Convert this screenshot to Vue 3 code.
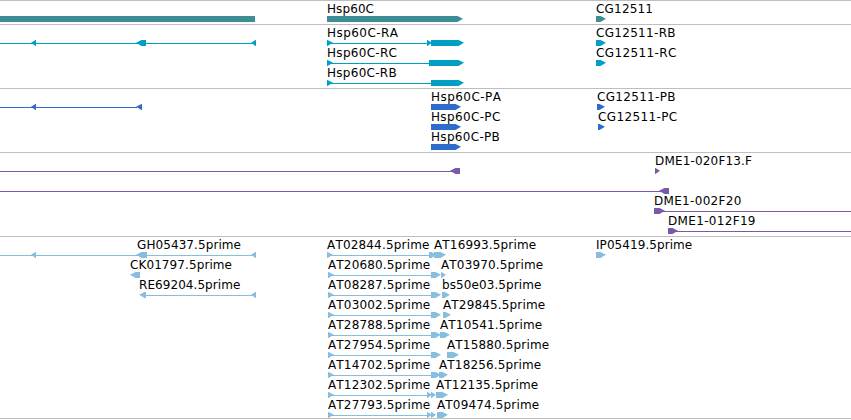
<script setup>
const WIDTH = 851
const ROW = 20

// line: [row, start, end]
// feature: [row, start, end, direction, label?, label width?]
const tracks = [
  {
    id: 'gene', color: '#3c8e94', height: 24,
    lines: [],
    features: [[0, 0, 255, 0], [0, 327, 463, 1, 'Hsp60C', 47], [0, 596, 606, 1, 'CG12511', 57]],
  },
  {
    id: 'transcript', color: '#009fc3', height: 64,
    lines: [[0, 0, 252], [0, 331, 428], [1, 331, 430], [2, 331, 432]],
    features: [
      [0, 31, 36, -1], [0, 136, 146, -1], [0, 251, 256, -1],
      [0, 327, 333, 1, 'Hsp60C-RA', 71], [0, 427, 432, 1], [0, 431, 464, 1],
      [1, 327, 333, 1, 'Hsp60C-RC', 70], [1, 429, 431, 0], [1, 431, 464, 1],
      [2, 327, 333, 1, 'Hsp60C-RB', 69.7], [2, 431, 464, 1],
      [0, 596, 606, 1, 'CG12511-RB', 79.5], [1, 596, 606, 1, 'CG12511-RC', 80.3],
    ],
  },
  {
    id: 'protein', color: '#2f6bca', height: 64,
    lines: [[0, 0, 137]],
    features: [
      [0, 31, 36, -1], [0, 136, 142, -1],
      [0, 431, 461, 1, 'Hsp60C-PA', 70], [1, 431, 461, 1, 'Hsp60C-PC', 69.3],
      [2, 431, 461, 1, 'Hsp60C-PB', 68.8],
      [0, 597, 605, 1, 'CG12511-PB', 78.5], [1, 598, 605, 1, 'CG12511-PC', 79.2],
    ],
  },
  {
    id: 'clone', color: '#7b58a9', height: 84,
    lines: [[0, 0, 452], [1, 0, 661], [2, 663, 851], [3, 676, 851]],
    features: [
      [0, 450, 460, -1], [1, 659, 669, -1],
      [0, 655, 660, 1, 'DME1-020F13.F', 97],
      [2, 654, 665, 1, 'DME1-002F20', 87.3], [3, 668, 678, 1, 'DME1-012F19', 87.5],
    ],
  },
  {
    id: 'est', color: '#87bddd', height: 182,
    lines: [
      [0, 0, 252], [2, 144, 252], [0, 331, 429],
      ...[1, 2, 3, 4, 5, 6].map((r) => [r, 332, 431]),
      [7, 332, 428], [8, 332, 428],
    ],
    features: [
      [0, 31, 36, -1], [0, 136, 147, -1, 'GH05437.5prime', 104, 1], [0, 251, 256, -1],
      [1, 130, 140, -1, 'CK01797.5prime', 102],
      [2, 139, 146, -1, 'RE69204.5prime', 101.3], [2, 251, 256, -1],
      [0, 327, 333, 1, 'AT02844.5prime', 102.4],
      [1, 328, 334, 1, 'AT20680.5prime', 102.2], [2, 328, 334, 1, 'AT08287.5prime', 102.2],
      [3, 328, 334, 1, 'AT03002.5prime', 102.2], [4, 328, 334, 1, 'AT28788.5prime', 102.2],
      [5, 328, 334, 1, 'AT27954.5prime', 102.2], [6, 328, 334, 1, 'AT14702.5prime', 102.2],
      [7, 328, 334, 1, 'AT12302.5prime', 102.2], [8, 328, 334, 1, 'AT27793.5prime', 102.2],
      [0, 429, 431, 0], [0, 431, 436, 1],
      ...[1, 2, 3, 4, 5, 6].map((r) => [r, 431, 441, 1]),
      [7, 427, 432, 1], [7, 431, 436, 1], [8, 427, 432, 1], [8, 431, 436, 1],
      [0, 434, 446, 1, 'AT16993.5prime', 102.2], [1, 441, 446, 1, 'AT03970.5prime', 102.2],
      [2, 442, 450, 1, 'bs50e03.5prime', 99.3], [3, 443, 451, 1, 'AT29845.5prime', 102.2],
      [4, 440, 450, 1, 'AT10541.5prime', 102.2], [5, 447, 459, 1, 'AT15880.5prime', 102.2],
      [6, 439, 448, 1, 'AT18256.5prime', 102.2], [7, 436, 448, 1, 'AT12135.5prime', 102.2],
      [8, 437, 448, 1, 'AT09474.5prime', 102.2],
      [0, 596, 606, 1, 'IP05419.5prime', 96.2],
    ],
  },
]

const labelled = (t) => t.features.filter((f) => f[4])

function shape([row, a, b, dir]) {
  const t = row * ROW + 16
  const m = t + 2.8
  const d = t + 6
  const tip = Math.min(6, b - a)
  if (dir > 0) return `${a},${t} ${b - tip + 0.5},${t} ${b},${m} ${b - tip + 0.5},${d} ${a},${d}`
  if (dir < 0) return `${b},${t} ${a + tip - 0.5},${t} ${a},${m} ${a + tip - 0.5},${d} ${b},${d}`
  return `${a},${t} ${b},${t} ${b},${d} ${a},${d}`
}
</script>

<template>
  <main class="browser">
    <section v-for="t in tracks" :key="t.id" class="track">
      <svg class="canvas" :width="WIDTH" :height="t.height" :fill="t.color">
        <rect class="rule" x="0" y="0" :width="WIDTH" height="1" />
        <text
          v-for="f in labelled(t)" :key="f[4]" class="label"
          :x="f[1] + (f[6] || 0)" :y="f[0] * ROW + 13" :textLength="f[5]"
        >{{ f[4] }}</text>
        <rect
          v-for="(l, i) in t.lines" :key="'l' + i" class="link"
          :x="l[1]" :y="l[0] * ROW + 19" :width="l[2] - l[1]" height="1"
        />
        <polygon v-for="(f, i) in t.features" :key="'f' + i" :points="shape(f)" />
      </svg>
    </section>
    <div class="end"></div>
  </main>
</template>

<style scoped>
.browser {
  display: flex;
  flex-direction: column;
  width: 851px;
  height: 420px;
  overflow: hidden;
  background: #fff;
}
.track {
  flex: none;
}
.canvas {
  display: block;
}
.rule {
  fill: #bebebe;
}
.link {
  shape-rendering: crispEdges;
}
.label {
  fill: #000;
  font: 12px "DejaVu Sans", sans-serif;
  font-kerning: none;
}
.end {
  flex: none;
  height: 1px;
  background: #bebebe;
}
</style>
